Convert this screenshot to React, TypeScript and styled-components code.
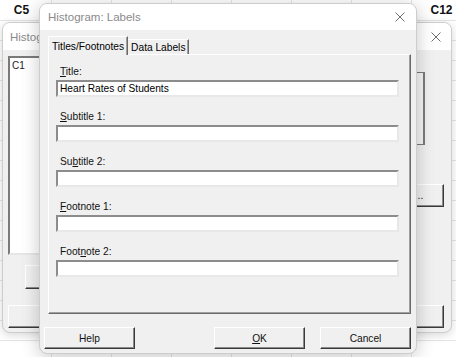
import React from 'react';
import styled, { createGlobalStyle } from 'styled-components';

/**
 * global
 * _______________________________________________________________________________
 */
const GlobalStyle = createGlobalStyle`
  html, body {
    margin: 0;
    padding: 0;
  }
  body {
    font-family: 'Liberation Sans', Arial, sans-serif;
    overflow: hidden;
  }
`;

// columns C6..C11 sit under the dialogs
const COLUMNS = ['C5', '', '', '', '', '', '', 'C12'];

const FIELDS = [
  { pre: '', key: 'T', post: 'itle:', value: 'Heart Rates of Students' },
  { pre: '', key: 'S', post: 'ubtitle 1:', value: '' },
  { pre: 'Su', key: 'b', post: 'title 2:', value: '' },
  { pre: '', key: 'F', post: 'ootnote 1:', value: '' },
  { pre: 'Foot', key: 'n', post: 'ote 2:', value: '' },
];

const CloseIcon = () => (
  <svg width='10' height='10' viewBox='0 0 10 10'>
    <path d='M0.5 0.5L9.5 9.5M9.5 0.5L0.5 9.5' stroke='#6e6e6e' strokeWidth='1' fill='none' />
  </svg>
);

const App = () => {
  /**
   * template
   * _______________________________________________________________________________
   */
  return (
    <Desktop>
      <GlobalStyle />
      <Sheet>
        <ColumnHeader>
          {COLUMNS.map((c, i) => (
            <ColumnCell key={i}>{c}</ColumnCell>
          ))}
        </ColumnHeader>
        <SheetBody />
      </Sheet>

      {/* dialog behind */}
      <Window $left={2} $top={22} $width={450} $height={311} $shadow='0 2px 10px rgba(0,0,0,0.16)'>
        <TitleBar $height={27} $padLeft={7} $padRight={10}>
          <TitleText>Histogram</TitleText>
          <CloseIcon />
        </TitleBar>
        <BackBody>
          <BackColumn>
            <ListBox>C1</ListBox>
            <ClassicButton $width={90} $height={24} style={{ marginTop: 10, marginLeft: 17 }} />
            <ClassicButton $width={100} $height={23} style={{ marginTop: 16 }} />
          </BackColumn>
          <BackColumn $alignEnd>
            <SideBox />
            <ClassicButton $width={80} $height={23} style={{ marginTop: 39 }}>
              Labels...
            </ClassicButton>
            <ClassicButton $width={80} $height={23} style={{ marginTop: 98 }} />
          </BackColumn>
        </BackBody>
      </Window>

      {/* Labels dialog */}
      <Window $left={39} $top={3} $width={378} $height={351} $shadow='0 3px 18px rgba(0,0,0,0.22)'>
        <TitleBar $height={26} $padLeft={8} $padRight={11}>
          <TitleText>Histogram: Labels</TitleText>
          <CloseIcon />
        </TitleBar>
        <DialogBody>
          <TabStrip>
            <Tab $active>Titles/Footnotes</Tab>
            <Tab>Data Labels</Tab>
          </TabStrip>
          <TabPanel>
            {FIELDS.map((f) => (
              <Field key={f.post}>
                <FieldLabel>
                  {f.pre}
                  <u>{f.key}</u>
                  {f.post}
                </FieldLabel>
                <TextBox>{f.value}</TextBox>
              </Field>
            ))}
          </TabPanel>
          <ButtonRow>
            <ClassicButton $width={91} $height={22}>
              Help
            </ClassicButton>
            <ButtonGroup>
              <ClassicButton $width={91} $height={22}>
                <u>O</u>K
              </ClassicButton>
              <ClassicButton $width={91} $height={22}>
                Cancel
              </ClassicButton>
            </ButtonGroup>
          </ButtonRow>
        </DialogBody>
      </Window>
    </Desktop>
  );
};

export default App;

/**
 * styled-component
 * _______________________________________________________________________________
 */

const Desktop = styled.div`
  position: relative;
  width: 456px;
  height: 357px;
  overflow: hidden;
  background: #fff;
`;

const Sheet = styled.div`
  display: flex;
  flex-direction: column;
  height: 100%;
`;

const ColumnHeader = styled.div`
  display: flex;
  margin-left: -8px;
  height: 20px;
  border-bottom: 1px solid #e6e6e6;
`;

const ColumnCell = styled.div`
  flex: 0 0 60px;
  box-sizing: border-box;
  border-right: 1px solid #e6e6e6;
  display: flex;
  align-items: center;
  justify-content: center;
  font-size: 12px;
  font-weight: 700;
  color: #111;
`;

const SheetBody = styled.div`
  flex: 1;
  background-image: linear-gradient(#e6e6e6 1px, transparent 1px),
    linear-gradient(90deg, #e6e6e6 1px, transparent 1px);
  background-size: 100% 20px, 60px 100%;
  background-position: 0 19px, 51px 0;
`;

const Window = styled.div<{ $left: number; $top: number; $width: number; $height: number; $shadow: string }>`
  position: absolute;
  left: ${({ $left }) => $left}px;
  top: ${({ $top }) => $top}px;
  width: ${({ $width }) => $width}px;
  height: ${({ $height }) => $height}px;
  box-sizing: border-box;
  display: flex;
  flex-direction: column;
  background: #f0f0f0;
  border: 1px solid #cdcdcd;
  border-radius: 8px;
  overflow: hidden;
  box-shadow: ${({ $shadow }) => $shadow};
`;

const TitleBar = styled.div<{ $height: number; $padLeft: number; $padRight: number }>`
  flex: 0 0 ${({ $height }) => $height}px;
  display: flex;
  align-items: center;
  justify-content: space-between;
  padding: 0 ${({ $padRight }) => $padRight}px 0 ${({ $padLeft }) => $padLeft}px;
  background: #fff;
`;

const TitleText = styled.span`
  font-size: 11.5px;
  color: #8a8a8a;
`;

const BackBody = styled.div`
  flex: 1;
  display: flex;
  justify-content: space-between;
  padding: 0 7px 0 5px;
`;

const BackColumn = styled.div<{ $alignEnd?: boolean }>`
  display: flex;
  flex-direction: column;
  align-items: ${({ $alignEnd }) => ($alignEnd ? 'flex-end' : 'flex-start')};
`;

const ListBox = styled.div`
  margin-top: 6px;
  width: 110px;
  height: 199px;
  box-sizing: border-box;
  background: #fff;
  border: 2px solid;
  border-color: #7a7a7a #e6e6e6 #e6e6e6 #7a7a7a;
  padding: 2px 2px;
  font-size: 10px;
  color: #222;
`;

const SideBox = styled.div`
  margin-top: 22px;
  margin-right: 19px;
  width: 40px;
  height: 73px;
  box-sizing: border-box;
  background: #f4f4f4;
  border: 1px solid #7a7a7a;
  border-right-width: 2px;
`;

const DialogBody = styled.div`
  flex: 1;
  display: flex;
  flex-direction: column;
  padding: 6px 5px 0 8px;
`;

const TabStrip = styled.div`
  display: flex;
  align-items: flex-end;
  height: 18px;
  position: relative;
  z-index: 1;
`;

const Tab = styled.div<{ $active?: boolean }>`
  box-sizing: border-box;
  height: ${({ $active }) => ($active ? 19 : 15)}px;
  margin-bottom: ${({ $active }) => ($active ? -1 : 0)}px;
  padding: 0 3px;
  display: flex;
  align-items: center;
  justify-content: center;
  background: #f0f0f0;
  border-top: 1px solid #fff;
  border-left: ${({ $active }) => ($active ? '1px solid #fff' : 'none')};
  border-right: 1px solid #6a6a6a;
  box-shadow: inset -1px 0 0 #a0a0a0;
  font-size: 10.2px;
  color: #000;
  white-space: nowrap;
`;

const TabPanel = styled.div`
  width: 363px;
  height: 260px;
  box-sizing: border-box;
  border-top: 1px solid #fff;
  border-left: 1px solid #fff;
  border-right: 1px solid #6a6a6a;
  border-bottom: 1px solid #6a6a6a;
  box-shadow: inset -1px -1px 0 #a0a0a0;
  padding: 9px 0 0 7px;
  display: flex;
  flex-direction: column;
  gap: 12px;
`;

const Field = styled.div`
  display: flex;
  flex-direction: column;
  gap: 1px;
`;

const FieldLabel = styled.div`
  height: 15px;
  line-height: 15px;
  padding-left: 4px;
  font-size: 10.2px;
  color: #111;
`;

const TextBox = styled.div`
  width: 343px;
  height: 17px;
  box-sizing: border-box;
  background: #fff;
  border: 2px solid;
  border-color: #8c8c8c #e8e8e8 #e8e8e8 #8c8c8c;
  padding: 0 2px;
  font-size: 10.2px;
  line-height: 13px;
  color: #000;
`;

const ButtonRow = styled.div`
  margin-top: 13px;
  margin-left: -4px;
  display: flex;
  justify-content: space-between;
`;

const ButtonGroup = styled.div`
  display: flex;
  gap: 15px;
`;

const ClassicButton = styled.div<{ $width: number; $height: number }>`
  width: ${({ $width }) => $width}px;
  height: ${({ $height }) => $height}px;
  box-sizing: border-box;
  display: flex;
  align-items: center;
  justify-content: center;
  background: #f0f0f0;
  border-top: 1px solid #fff;
  border-left: 1px solid #fff;
  border-right: 1px solid #3a3a3a;
  border-bottom: 1px solid #3a3a3a;
  box-shadow: inset -1px -1px 0 #8a8a8a;
  font-size: 10.2px;
  color: #111;
`;
